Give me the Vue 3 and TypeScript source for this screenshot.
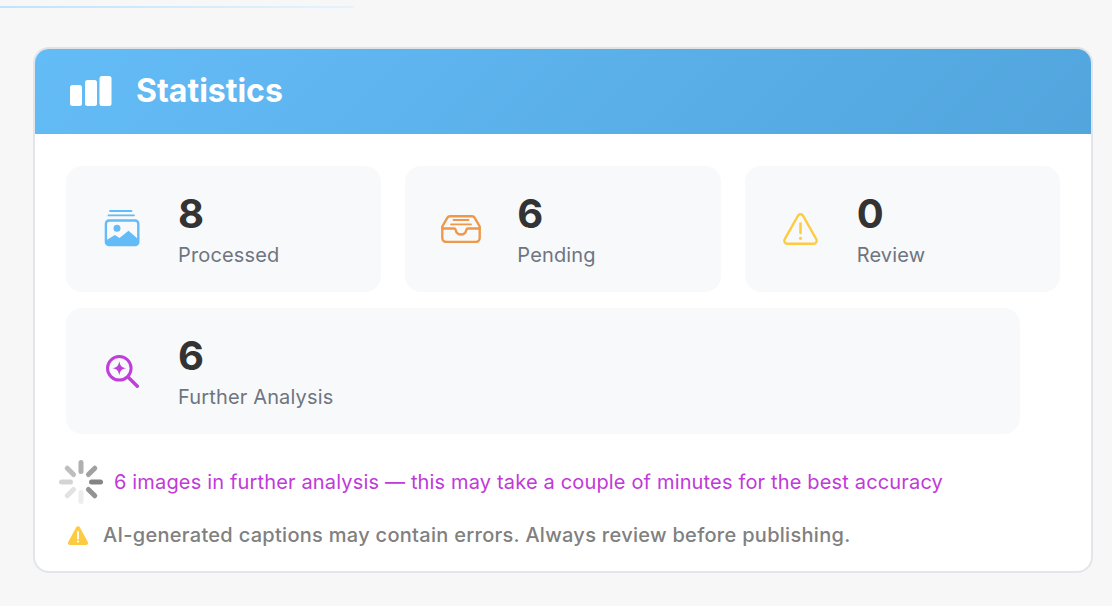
<script setup lang="ts">
interface Stat { value: number; label: string; icon: string; wide?: boolean }
const stats: Stat[] = [
  { value: 8, label: 'Processed', icon: 'images' },
  { value: 6, label: 'Pending', icon: 'inbox' },
  { value: 0, label: 'Review', icon: 'warn' },
  { value: 6, label: 'Further Analysis', icon: 'search', wide: true },
]
const spokes = [
  { a: 0, o: 0.55 }, { a: 45, o: 0.65 }, { a: 90, o: 0.85 }, { a: 135, o: 0.75 },
  { a: 180, o: 0.12 }, { a: 225, o: 0.2 }, { a: 270, o: 0.3 }, { a: 315, o: 0.45 },
]
</script>

<template>
  <div class="page">
    <div class="topline"></div>
    <section class="panel">
      <header class="head">
        <svg class="head-icon" width="42" height="30" viewBox="0 0 42 30">
          <rect x="0" y="9" width="12" height="21" rx="2.500" fill="#fff" />
          <rect x="15" y="4" width="12" height="26" rx="2.500" fill="#fff" />
          <rect x="29.500" y="0" width="12" height="30" rx="2.500" fill="#fff" />
        </svg>
        <h1>Statistics</h1>
      </header>
      <div class="body">
        <div class="grid">
          <div v-for="s in stats" :key="s.label + s.value" class="stat" :class="{ wide: s.wide }">
            <div class="ico">
              <svg v-if="s.icon === 'images'" width="36" height="38" viewBox="0 0 36 38">
                <path d="M6 1h21.500M4.500 5.400h25.500" stroke="#63bbf7" stroke-width="1.800" stroke-linecap="round" fill="none" />
                <rect x="1.900" y="10.500" width="32.400" height="24.600" rx="3.200" fill="none" stroke="#63bbf7" stroke-width="2.400" />
                <circle cx="13" cy="18.300" r="3.500" fill="#63bbf7" />
                <path d="M2.500 30L11 25l4.500 3 9-7.200L34 29v3a3 3 0 0 1-3 3H5.500a3 3 0 0 1-3-3z" fill="#63bbf7" />
              </svg>
              <svg v-else-if="s.icon === 'inbox'" width="40" height="28" viewBox="0 0 40 28">
                <path d="M9 1.200h22a3 3 0 0 1 2.600 1.400L38.700 11.500v11.500a4 4 0 0 1-4 4H5.300a4 4 0 0 1-4-4V11.500L6.400 2.600A3 3 0 0 1 9 1.200z" fill="none" stroke="#f0984a" stroke-width="2.400" stroke-linejoin="round" />
                <path d="M1.400 13.500H13c1 0 1.400.5 1.600 1.200C15.200 17.500 17 19.500 20 19.500s4.800-2 5.400-4.800c.2-.7.6-1.200 1.600-1.200h11.600" fill="none" stroke="#f0984a" stroke-width="2.400" stroke-linecap="round" />
                <path d="M12.500 5h15M10 9.400h20" stroke="#f0984a" stroke-width="1.800" stroke-linecap="round" fill="none" />
              </svg>
              <svg v-else-if="s.icon === 'warn'" width="35" height="32" viewBox="0 0 36 32" preserveAspectRatio="none">
                <path d="M15.300 2.800a3.100 3.100 0 0 1 5.400 0l13.500 23.400a3.100 3.100 0 0 1-2.700 4.600H4.500a3.100 3.100 0 0 1-2.700-4.600z" fill="none" stroke="#fccb42" stroke-width="2.400" stroke-linejoin="round" />
                <path d="M18 10.500v9.500" stroke="#fccb42" stroke-width="2.600" stroke-linecap="round" />
                <circle cx="18" cy="25.300" r="1.600" fill="#fccb42" />
              </svg>
              <svg v-else width="34" height="34" viewBox="0 0 34 34">
                <circle cx="14.300" cy="14.300" r="11.800" fill="none" stroke="#c03fdb" stroke-width="3" />
                <path d="M23.500 23.500l8.800 8.800" stroke="#c03fdb" stroke-width="3.400" stroke-linecap="round" />
                <path d="M14.300 7.300c.9 4.700 2.300 6.100 7 7-4.700.9-6.100 2.300-7 7-.9-4.700-2.300-6.100-7-7 4.700-.9 6.100-2.300 7-7z" fill="#c03fdb" />
              </svg>
            </div>
            <div class="txt">
              <div class="num">{{ s.value }}</div>
              <div class="lbl">{{ s.label }}</div>
            </div>
          </div>
        </div>
        <div class="progress">
          <svg class="spinner" width="46" height="46" viewBox="0 0 46 46">
            <rect
              v-for="sp in spokes"
              :key="sp.a"
              x="20.500"
              y="1"
              width="5"
              height="14"
              rx="2.500"
              fill="#6f6f6f"
              :opacity="sp.o"
              :transform="`rotate(${sp.a} 23 23)`"
            />
          </svg>
          <span>6 images in further analysis — this may take a couple of minutes for the best accuracy</span>
        </div>
        <div class="note">
          <svg width="22" height="19" viewBox="0 0 22 19">
            <path d="M9.200 1.300a2 2 0 0 1 3.600 0l8 14.600a2 2 0 0 1-1.800 3H3a2 2 0 0 1-1.800-3z" fill="#fccb42" />
            <path d="M11 6v6.500" stroke="#fff" stroke-width="1.800" stroke-linecap="round" />
            <circle cx="11" cy="15.600" r="1.100" fill="#fff" />
          </svg>
          <span>AI-generated captions may contain errors. Always review before publishing.</span>
        </div>
      </div>
    </section>
  </div>
</template>

<style>
html, body { margin: 0; background: #f7f7f7; }
</style>

<style scoped>
.page {
  position: relative;
  height: 606px;
  padding: 47px 19px 0 33px;
  box-sizing: border-box;
  background: #f7f7f7;
  font-family: Inter, "Liberation Sans", sans-serif;
  overflow: hidden;
}
.topline {
  position: absolute;
  left: 0;
  top: 6px;
  width: 354px;
  height: 2px;
  background: linear-gradient(90deg, #bfe3fb, #e6f3fd);
}
.panel {
  width: 1060px;
  height: 526px;
  box-sizing: border-box;
  background: #fff;
  border: 2px solid #e2e5e9;
  border-top-color: #e2e2e2;
  border-radius: 16px;
  overflow: hidden;
}
.head {
  height: 85px;
  display: flex;
  align-items: center;
  padding-left: 35px;
  gap: 24px;
  background: linear-gradient(135deg, #64bcf7, #52a5dd);
}
.head-icon { margin-top: -1px; }
.head h1 {
  margin: 0;
  color: #fff;
  font-size: 32px;
  font-weight: 700;
  line-height: 36px;
  position: relative;
  top: -1px;
}
.body { padding: 32px 31px 0; }
.grid {
  display: grid;
  grid-template-columns: repeat(3, 1fr);
  column-gap: 24px;
  row-gap: 16px;
  width: 994px;
}
.stat {
  height: 126px;
  box-sizing: border-box;
  display: flex;
  align-items: center;
  background: #f8f9fb;
  border-radius: 16px;
  padding-left: 34px;
  gap: 33px;
}
.stat.wide {
  grid-column: 1 / -1;
  margin-right: 40px;
}
.ico {
  width: 46px;
  height: 46px;
  margin-left: -1px;
  display: flex;
  align-items: center;
  justify-content: center;
  flex: none;
}
.num {
  font-size: 40px;
  font-weight: 700;
  line-height: 48px;
  color: #333;
}
.lbl {
  font-size: 20px;
  line-height: 28px;
  color: #6e7580;
  margin-top: 3px;
  letter-spacing: 0.15px;
}
.progress {
  display: flex;
  align-items: center;
  gap: 10px;
  margin: 25px 0 0 -8px;
  height: 46px;
  font-size: 20px;
  letter-spacing: 0.16px;
  color: #c03ad8;
}
.note {
  display: flex;
  align-items: center;
  gap: 14px;
  margin: 15px 0 0 1px;
  font-size: 20px;
  font-weight: 500;
  letter-spacing: 0.29px;
  color: #808080;
  height: 30px;
}
</style>
